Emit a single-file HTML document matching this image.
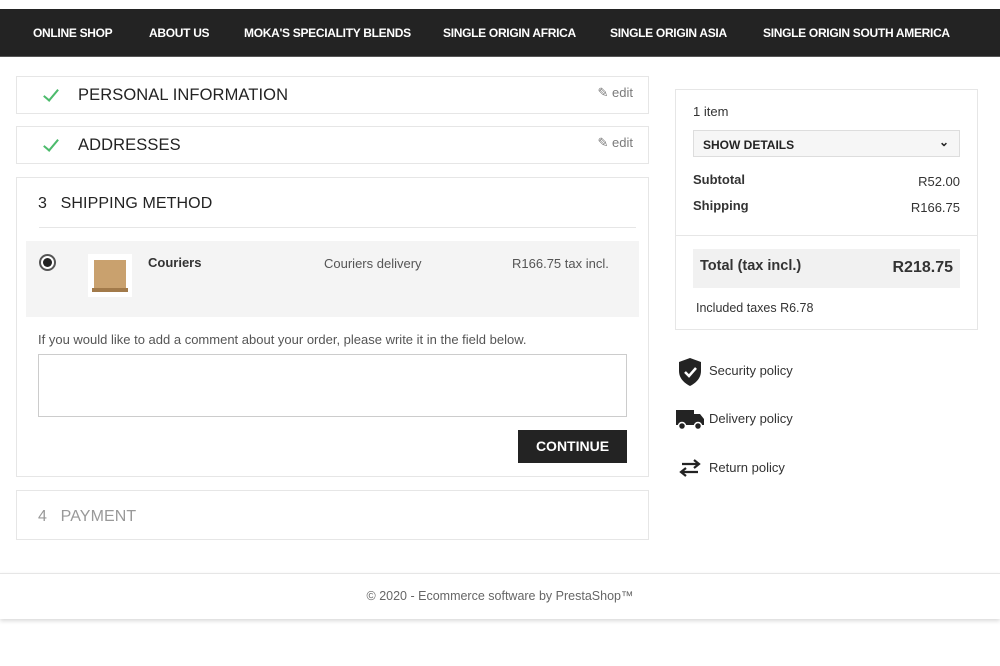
<!DOCTYPE html>
<html><head><meta charset="utf-8"><style>
*{box-sizing:border-box;margin:0;padding:0}
body{width:1000px;height:666px;background:#fff;font-family:"Liberation Sans",sans-serif;color:#232323;position:relative;overflow:hidden}
.nav{position:absolute;top:9px;left:0;width:1000px;height:48px;background:#232323;border-bottom:1px solid #555}
.nav span{position:absolute;top:17px;color:#fff;font-size:12px;font-weight:bold;letter-spacing:-0.3px}
.box{position:absolute;left:16px;width:633px;border:1px solid #e6e6e6;background:#fff}
.h{position:absolute;font-size:16px;color:#232323;letter-spacing:0.1px}
.check{position:absolute;left:30px;top:9px;width:8px;height:15px;border-right:2px solid #4cbb6c;border-bottom:2px solid #4cbb6c;transform:rotate(40deg)}
.edit{position:absolute;right:15px;top:8px;font-size:13px;color:#7a7a7a}
.t{position:absolute;font-size:13px;color:#333}
</style></head><body>
<div class="nav">
<span style="left:33px">ONLINE SHOP</span>
<span style="left:149px">ABOUT US</span>
<span style="left:244px">MOKA'S SPECIALITY BLENDS</span>
<span style="left:443px">SINGLE ORIGIN AFRICA</span>
<span style="left:610px">SINGLE ORIGIN ASIA</span>
<span style="left:763px">SINGLE ORIGIN SOUTH AMERICA</span>
</div>

<div class="box" style="top:76px;height:38px"><div class="check"></div><div class="h" style="left:61px;top:9px;font-size:16.5px">PERSONAL INFORMATION</div><div class="edit">✎ edit</div></div>
<div class="box" style="top:126px;height:38px"><div class="check"></div><div class="h" style="left:61px;top:9px;font-size:16.5px">ADDRESSES</div><div class="edit">✎ edit</div></div>

<div class="box" style="top:177px;height:300px">
<div class="h" style="left:21px;top:17px">3&nbsp;&nbsp;&nbsp;SHIPPING METHOD</div>
<div style="position:absolute;left:22px;top:49px;width:597px;height:1px;background:#e6e6e6"></div>
<div style="position:absolute;left:9px;top:63px;width:613px;height:76px;background:#f4f4f4">
<div style="position:absolute;left:13px;top:13px;width:17px;height:17px;border:2px solid #555;border-radius:50%;background:#fff"><div style="position:absolute;left:2px;top:2px;width:9px;height:9px;border-radius:50%;background:#232323"></div></div>
<div style="position:absolute;left:62px;top:13px;width:44px;height:43px;background:#fff"><div style="position:absolute;left:6px;top:6px;width:32px;height:30px;background:#c9a16e"></div><div style="position:absolute;left:4px;top:34px;width:36px;height:4px;background:#a27a4a"></div></div>
<div class="t" style="left:122px;top:14px;font-weight:bold">Couriers</div>
<div class="t" style="left:298px;top:15px;color:#555">Couriers delivery</div>
<div class="t" style="left:486px;top:15px;color:#555">R166.75 tax incl.</div>
</div>
<div class="t" style="left:21px;top:154px;color:#555">If you would like to add a comment about your order, please write it in the field below.</div>
<div style="position:absolute;left:21px;top:176px;width:589px;height:63px;border:1px solid #ccc"></div>
<div style="position:absolute;left:501px;top:252px;width:109px;height:33px;background:#232323;color:#fff;font-size:14px;font-weight:bold;text-align:center;line-height:33px">CONTINUE</div>
</div>

<div class="box" style="top:490px;height:50px"><div class="h" style="left:21px;top:17px;color:#999">4&nbsp;&nbsp;&nbsp;PAYMENT</div></div>

<div style="position:absolute;left:675px;top:89px;width:303px;height:241px;border:1px solid #e6e6e6">
<div class="t" style="left:17px;top:14px">1 item</div>
<div style="position:absolute;left:17px;top:40px;width:267px;height:27px;border:1px solid #ddd;background:#f6f6f6;font-size:12px;font-weight:bold;padding:7px 9px">SHOW DETAILS<span style="position:absolute;right:10px;top:4px">⌄</span></div>
<div class="t" style="left:17px;top:82px;font-weight:bold">Subtotal</div><div class="t" style="right:17px;top:84px">R52.00</div>
<div class="t" style="left:17px;top:108px;font-weight:bold">Shipping</div><div class="t" style="right:17px;top:110px">R166.75</div>
<div style="position:absolute;left:0;top:145px;width:301px;height:1px;background:#e6e6e6"></div>
<div style="position:absolute;left:17px;top:159px;width:267px;height:39px;background:#f1f1f1"><div class="t" style="left:7px;top:9px;font-weight:bold;font-size:14.5px">Total (tax incl.)</div><div class="t" style="right:7px;top:10px;font-weight:bold;font-size:16px">R218.75</div></div>
<div class="t" style="left:20px;top:211px;font-size:12.5px">Included taxes R6.78</div>
</div>

<svg style="position:absolute;left:677px;top:357px" width="26" height="30" viewBox="0 0 26 30"><path d="M13 1 L24 5 V14 C24 21 19 26 13 29 C7 26 2 21 2 14 V5 Z" fill="#232323"/><path d="M8 15 L12 19 L19 11" stroke="#fff" stroke-width="2.5" fill="none"/></svg>
<div class="t" style="left:709px;top:363px">Security policy</div>
<svg style="position:absolute;left:675px;top:409px" width="30" height="22" viewBox="0 0 30 22"><rect x="1" y="1" width="18" height="15" fill="#232323"/><path d="M19 5 H25 L29 10 V16 H19 Z" fill="#232323"/><circle cx="7" cy="17" r="3.5" fill="#232323" stroke="#fff" stroke-width="1.5"/><circle cx="23" cy="17" r="3.5" fill="#232323" stroke="#fff" stroke-width="1.5"/></svg>
<div class="t" style="left:709px;top:411px">Delivery policy</div>
<svg style="position:absolute;left:678px;top:459px" width="24" height="18" viewBox="0 0 24 18"><path d="M4 5 H20 M16 1 L21 5 L16 9 M20 13 H4 M8 9 L3 13 L8 17" stroke="#232323" stroke-width="2.2" fill="none"/></svg>
<div class="t" style="left:709px;top:460px">Return policy</div>

<div style="position:absolute;left:0;top:573px;width:1000px;height:46px;border-top:1px solid #e6e6e6;box-shadow:0 2px 4px rgba(0,0,0,.15);background:#fff"></div>
<div class="t" style="left:0;width:1000px;text-align:center;top:589px;color:#666;font-size:12.5px">© 2020 - Ecommerce software by PrestaShop™</div>
</body></html>
